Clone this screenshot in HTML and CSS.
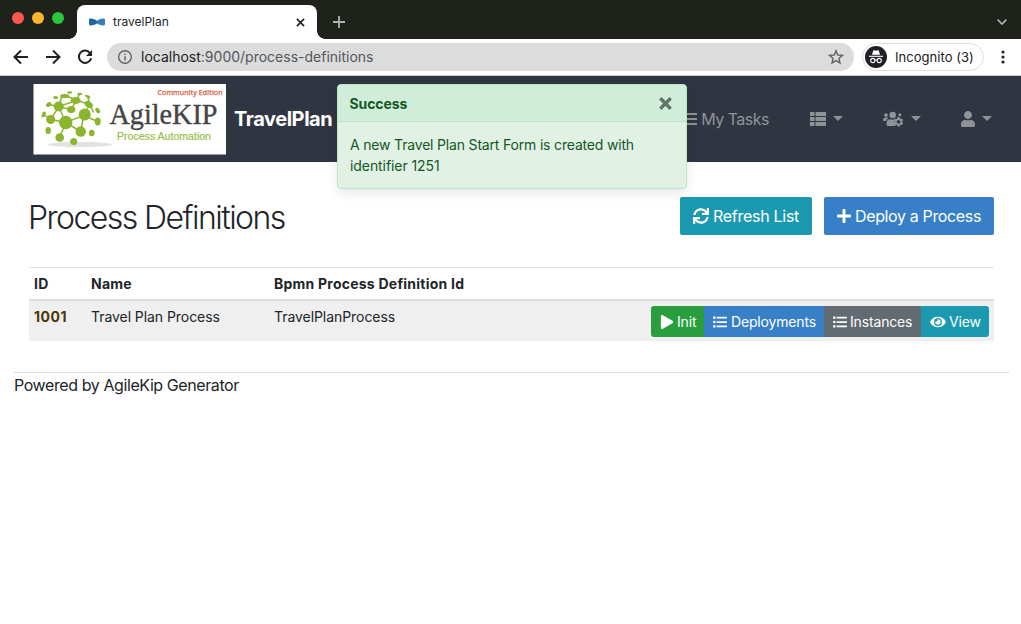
FILE: index.html
```html
<!DOCTYPE html>
<html lang="en">
<head>
<meta charset="utf-8">
<title>travelPlan</title>
<link rel="stylesheet" href="styles.css">
</head>
<body>
<svg class="defs" width="0" height="0">
  <symbol id="list" viewBox="0 0 512 512"><circle cx="48" cy="96" r="48"/><circle cx="48" cy="256" r="48"/><circle cx="48" cy="416" r="48"/><rect x="128" y="64" width="384" height="64" rx="16"/><rect x="128" y="224" width="384" height="64" rx="16"/><rect x="128" y="384" width="384" height="64" rx="16"/></symbol>
</svg>
<header class="browser">
  <div class="tabs">
    <div class="lights"><i class="red"></i><i class="amber"></i><i class="green"></i></div>
    <div class="tab">
      <svg class="favicon" viewBox="0 0 16 8"><path d="M0 1.6Q0 .5 1.4.5 5 .4 8 2.8V5.4Q5 7.3 1.8 7.6 0 7.6 0 6Z" fill="#22669f"/><path d="M16 1.6Q16 .5 14.6.5 11 .4 8 2.8V5.4Q11 7.3 14.2 7.6 16 7.6 16 6Z" fill="#347fbd"/></svg>
      <span class="tab-title">travelPlan</span>
      <svg class="tab-close" viewBox="0 0 10 10"><path d="M1 1l8 8M9 1L1 9"/></svg>
    </div>
    <svg class="new-tab" viewBox="0 0 12 12"><path d="M6 0v12M0 6h12"/></svg>
    <svg class="tab-search" viewBox="0 0 10 6"><path d="M.7.7L5 5 9.300.7"/></svg>
  </div>
  <div class="toolbar">
    <svg class="nav-icon" viewBox="0 0 16 16"><path d="M15 8H2M8 1.500L1.500 8 8 14.500"/></svg>
    <svg class="nav-icon" viewBox="0 0 16 16"><path d="M1 8h13M8 1.500L14.500 8 8 14.500"/></svg>
    <svg class="nav-icon" viewBox="0 0 16 16"><path d="M13.200 4.200A6.200 6.200 0 1 0 14.100 9.200"/><path d="M15 1v6H9z" class="fill"/></svg>
    <div class="address">
      <svg class="info" viewBox="0 0 14 14"><circle cx="7" cy="7" r="6.300"/><path d="M7 6.200v4.200M7 3.500v1.500"/></svg>
      <span class="url"><b>localhost</b>:9000/process-definitions</span>
      <svg class="star" viewBox="0 0 16 16"><path d="M8 1.700l1.800 4.300 4.700.4-3.600 3.100 1.100 4.600L8 11.600l-4 2.500 1.100-4.600L1.500 6.400l4.700-.4z"/></svg>
    </div>
    <div class="incognito">
      <svg viewBox="0 0 22 22"><circle cx="11" cy="11" r="11" fill="#202124"/><path d="M7 8.700l1.300-4.100q.3-.6 1-.4l1.700.5 1.700-.5q.7-.2 1 .4L15 8.700z" fill="#fff"/><path d="M4 10.300h14" stroke="#fff" stroke-width="1.100"/><g fill="none" stroke="#fff" stroke-width="1.100"><circle cx="7.800" cy="14.500" r="2.100"/><circle cx="14.200" cy="14.500" r="2.100"/><path d="M10 14.200q1-.8 2 0"/></g></svg>
      <span>Incognito (3)</span>
    </div>
    <svg class="more" viewBox="0 0 4 14"><circle cx="2" cy="2" r="1.600"/><circle cx="2" cy="7" r="1.600"/><circle cx="2" cy="12" r="1.600"/></svg>
  </div>
</header>

<nav class="navbar">
  <svg class="logo" viewBox="0 0 193 71">
    <rect x=".5" width="192.500" height="70.500" fill="#fff"/>
    <ellipse cx="47" cy="60.500" rx="32" ry="2.600" fill="#e2e2e2"/>
    <g transform="translate(.7 -.5)">
    <g stroke="#8ab52c" stroke-width="1.500" fill="none"><path d="M25 23L43 17 56 21 50 32 32 39 17 36 25 23 37 26 43 17M50 32L64 38M56 21L60 29M32 39L26 54M32 39L47 48 50 32M32 39L25 23M25 23L15 21M43 17L32 12M43 17L46 10M56 21L54 13M17 36L10 31M25 23L28 13"/></g>
    <g fill="#8ab52c"><circle cx="32" cy="39" r="6.700"/><circle cx="25" cy="23" r="5"/><circle cx="51" cy="31" r="6"/><circle cx="47" cy="48" r="5.200"/><circle cx="17" cy="36" r="4.500"/><ellipse cx="37.500" cy="26" rx="4.200" ry="3.500"/><ellipse cx="42" cy="17" rx="5" ry="3.500"/><ellipse cx="55" cy="21" rx="4.500" ry="3" transform="rotate(35 55 21)"/><circle cx="26" cy="54" r="4.300"/><circle cx="40" cy="58" r="3.500"/><ellipse cx="64" cy="38" rx="3" ry="4"/><ellipse cx="58" cy="49.500" rx="2.800" ry="3.300"/><ellipse cx="14.500" cy="47" rx="2.700" ry="3.500"/><ellipse cx="15" cy="21" rx="3" ry="2" transform="rotate(-35 15 21)"/><ellipse cx="10" cy="31" rx="1.800" ry="3" transform="rotate(25 10 31)"/><ellipse cx="31" cy="12.500" rx="4.500" ry="2"/><ellipse cx="46" cy="10.500" rx="2.500" ry="1.300"/><ellipse cx="36" cy="9" rx="2.500" ry="1.200"/><ellipse cx="22" cy="14" rx="2.500" ry="1.500"/><ellipse cx="54" cy="13" rx="3" ry="1.300" transform="rotate(25 54 13)"/><ellipse cx="64" cy="27" rx="2" ry="3" transform="rotate(-35 64 27)"/></g>
    </g>
    <text x="124.500" y="11" textLength="65" class="logo-edition">Community Edition</text>
    <text x="76.500" y="39.500" textLength="108" lengthAdjust="spacingAndGlyphs" class="logo-name">AgileKIP</text>
    <text x="84" y="56" textLength="94" lengthAdjust="spacingAndGlyphs" class="logo-tag">Process Automation</text>
  </svg>
  <span class="brand">TravelPlan</span>
  <div class="menu">
    <span class="tasks"><svg viewBox="0 0 12 14"><path d="M0 2h12M0 7h12M0 12h12"/></svg>My Tasks</span>
    <span class="item entities"><svg width="16" height="14" viewBox="0 0 16 14"><path d="M0 0h4.500v4H0zM5.500 0H16v4H5.500zM0 5h4.500v4H0zM5.500 5H16v4H5.500zM0 10h4.500v4H0zM5.500 10H16v4H5.500z"/></svg><i class="caret"></i></span>
    <span class="item admin"><svg width="20" height="16" viewBox="0 0 640 512"><circle cx="96" cy="130" r="62"/><circle cx="310" cy="125" r="105"/><circle cx="540" cy="120" r="50"/><path d="M0 290q0-80 64-80h64q25 0 42 18-58 32-68 92H20q-20 0-20-30zM110 430q0-165 120-165 75 30 150 0-25 60 0 110l-5 55 35 50H160q-50 0-50-50z"/><path fill-rule="evenodd" d="M462 195h72l8 42 28 16 40-14 36 62-32 28v32l32 28-36 62-40-14-28 16-8 42h-72l-8-42-28-16-40 14-36-62 32-28v-32l-32-28 36-62 40 14 28-16zM498 287a58 58 0 1 0 .1 0z"/></svg><i class="caret"></i></span>
    <span class="item account"><svg width="14" height="16" viewBox="0 0 448 512"><path d="M224 256c70.700 0 128-57.300 128-128S294.700 0 224 0 96 57.300 96 128s57.300 128 128 128zm89.600 32h-16.700c-22.200 10.200-46.900 16-72.900 16s-50.600-5.800-72.900-16h-16.700C60.200 288 0 348.200 0 422.400V464c0 26.500 21.500 48 48 48h352c26.500 0 48-21.500 48-48v-41.600c0-74.200-60.200-134.400-134.400-134.400z"/></svg><i class="caret"></i></span>
  </div>
</nav>

<section class="toast">
  <div class="toast-head"><strong>Success</strong><svg viewBox="0 0 12 12"><path d="M1.200 1.200l9.600 9.600M10.800 1.200l-9.600 9.600"/></svg></div>
  <div class="toast-body"><p class="line-one">A new Travel Plan Start Form is created with</p><p class="line-two">identifier 1251</p></div>
</section>

<main>
  <div class="heading">
    <h1>Process Definitions</h1>
    <button class="btn info-btn refresh"><svg width="16" height="16" viewBox="0 0 512 512"><path d="M440.650 12.570l4 82.770A247.160 247.160 0 0 0 255.830 8C134.730 8 33.910 94.920 12.290 209.820A12 12 0 0 0 24.090 224h49.050a12 12 0 0 0 11.670-9.260 175.910 175.910 0 0 1 317-56.940l-101.460-4.860a12 12 0 0 0-12.570 12v47.410a12 12 0 0 0 12 12H500a12 12 0 0 0 12-12V12a12 12 0 0 0-12-12h-47.370a12 12 0 0 0-11.980 12.570zM255.830 432a175.610 175.610 0 0 1-146-77.800l101.800 4.870a12 12 0 0 0 12.570-12v-47.400a12 12 0 0 0-12-12H12a12 12 0 0 0-12 12V500a12 12 0 0 0 12 12h47.350a12 12 0 0 0 12-12.600l-4.150-82.570A247.170 247.170 0 0 0 255.830 504c121.110 0 221.930-86.920 243.550-201.820a12 12 0 0 0-11.800-14.180h-49.050a12 12 0 0 0-11.670 9.260A175.860 175.860 0 0 1 255.830 432z"/></svg><span>Refresh List</span></button>
    <button class="btn primary deploy"><svg width="14" height="16" viewBox="0 0 448 512"><path d="M416 208H272V64c0-17.670-14.330-32-32-32h-32c-17.670 0-32 14.330-32 32v144H32c-17.670 0-32 14.330-32 32v32c0 17.670 14.330 32 32 32h144v144c0 17.670 14.330 32 32 32h32c17.670 0 32-14.330 32-32V304h144c17.670 0 32-14.330 32-32v-32c0-17.670-14.330-32-32-32z"/></svg><span>Deploy a Process</span></button>
  </div>
  <div class="table">
    <div class="row head"><b class="c-id">ID</b><b class="c-name">Name</b><b class="c-bpmn">Bpmn Process Definition Id</b></div>
    <div class="row data">
      <b class="c-id id-link">1001</b><span class="c-name">Travel Plan Process</span><span class="c-bpmn">TravelPlanProcess</span>
      <div class="group">
        <button class="success g-init"><svg width="14" height="14" viewBox="0 0 448 512"><path d="M424.400 214.700L72.400 6.600C43.800-10.300 0 6.100 0 47.900V464c0 37.500 40.700 60.100 72.400 41.300l352-208c31.400-18.500 31.500-64.100 0-82.600z"/></svg><span>Init</span></button>
        <button class="primary g-deployments"><svg width="14" height="14"><use href="#list"/></svg><span>Deployments</span></button>
        <button class="secondary g-instances"><svg width="14" height="14"><use href="#list"/></svg><span>Instances</span></button>
        <button class="info-btn g-view"><svg width="16" height="14" viewBox="0 0 576 512"><path d="M572.520 241.400C518.290 135.590 410.930 64 288 64S57.680 135.640 3.480 241.410a32.350 32.350 0 0 0 0 29.190C57.710 376.410 165.070 448 288 448s230.320-71.640 284.520-177.410a32.350 32.350 0 0 0 0-29.190zM288 400a144 144 0 1 1 144-144 143.930 143.930 0 0 1-144 144zm0-240a95.310 95.310 0 0 0-25.310 3.790 47.850 47.850 0 0 1-66.900 66.900A95.780 95.780 0 1 0 288 160z"/></svg><span>View</span></button>
      </div>
    </div>
  </div>
</main>
<footer><p>Powered by AgileKip Generator</p></footer>
</body>
</html>
```
FILE: styles.css
```css
* { box-sizing: border-box; }
body { margin: 0; background: #fff; color: #212529; font-family: Inter, "Liberation Sans", sans-serif; font-size: 14px; height: 624px; overflow: hidden; position: relative; }
svg { flex: none; display: block; }
p, h1 { margin: 0; }
span, b, strong, p, h1 { white-space: nowrap; }
button { border: 0; color: #fff; font-family: inherit; padding: 0; display: flex; align-items: center; }
button svg { fill: #fff; }
.defs { position: absolute; }

/* Browser window */
.tabs { height: 39px; background: #1e221b; display: flex; align-items: flex-start; padding-left: 12px; padding-right: 14px; }
.lights { display: flex; gap: 8px; padding-top: 12px; width: 65px; }
.lights i { width: 12px; height: 12px; border-radius: 50%; }
.red { background: #ff5850; }
.amber { background: #fdb52b; }
.green { background: #29c73b; }
.tab { position: relative; width: 240px; height: 34px; margin-top: 5px; background: #fff; border-radius: 8px 8px 0 0; display: flex; align-items: center; padding: 0 12px; }
.tab::before, .tab::after { content: ""; position: absolute; bottom: 0; width: 8px; height: 8px; }
.tab::before { left: -8px; background: radial-gradient(circle at 0 0, transparent 7.500px, #fff 8px); }
.tab::after { right: -8px; background: radial-gradient(circle at 100% 0, transparent 7.500px, #fff 8px); }
.favicon { width: 16px; height: 8px; }
.tab-title { margin-left: 8px; margin-top: -1px; font-size: 12px; flex: 1; }
.tab-close { width: 9px; height: 9px; stroke: #202124; stroke-width: 1.800; }
.new-tab { width: 12px; height: 12px; margin: 16px 0 0 16px; stroke: #b0b2af; stroke-width: 1.800; }
.tab-search { width: 10px; height: 6px; margin: 19px 0 0 auto; fill: none; stroke: #b0b2af; stroke-width: 1.700; }
.toolbar { height: 37px; border-bottom: 1px solid #c9cccb; display: flex; align-items: center; padding: 0 16px 0 13px; }
.nav-icon { width: 16px; height: 16px; margin-right: 16px; fill: none; stroke: #202124; stroke-width: 2; }
.nav-icon .fill { fill: #202124; stroke: none; }
.address { margin-left: -2px; width: 747px; height: 28px; border-radius: 14px; background: #dcdcdc; display: flex; align-items: center; padding: 0 10px 0 11px; }
.info { width: 14px; height: 14px; fill: none; stroke: #5f6368; stroke-width: 1.400; }
.url { margin-left: 9px; margin-top: -1px; font-size: 14px; color: #54575b; flex: 1; }
.url b { color: #202124; font-weight: 400; }
.star { width: 16px; height: 16px; fill: none; stroke: #5f6368; stroke-width: 1.400; }
.incognito { margin-left: 8px; width: 122px; height: 28px; border: 1px solid #dfdfdf; border-radius: 14px; display: flex; align-items: center; padding-left: 2px; font-size: 13px; color: #202124; letter-spacing: .04px; }
.incognito svg { width: 22px; height: 22px; margin-right: 8px; }
.more { width: 4px; height: 14px; margin-left: auto; fill: #202124; }

/* Application bar */
.navbar { height: 86px; background: #303641; display: flex; align-items: center; padding-left: 33px; padding-right: 29px; color: #8f9297; }
.logo { width: 193px; height: 71px; }
.logo-edition { font: 7px "Open Sans", sans-serif; fill: #d8593a; stroke: #d8593a; stroke-width: .25; }
.logo-name { font: 30px "Liberation Serif", serif; fill: #444; stroke: #444; stroke-width: .35; }
.logo-tag { font: 10.500px "Liberation Sans", sans-serif; fill: #93bd3b; stroke: #93bd3b; stroke-width: .15; }
.brand { margin-left: 8px; font-size: 20px; font-weight: 700; color: #fff; letter-spacing: -.45px; }
.menu { margin-left: auto; display: flex; align-items: center; }
.menu svg { fill: currentColor; }
.tasks { display: flex; align-items: center; gap: 4px; font-size: 16px; letter-spacing: -.5px; }
.tasks svg { width: 12px; height: 14px; stroke: currentColor; stroke-width: 2; }
.item { display: flex; align-items: center; gap: 7px; }
.caret { border: 5px solid transparent; border-top-color: currentColor; border-bottom: 0; margin-top: -2px; }
.entities { margin-left: 41px; }
.admin { margin-left: 40px; gap: 8px; }
.account { margin-left: 40px; }

/* Notification */
.toast { position: absolute; z-index: 2; top: 84px; left: 337px; width: 350px; height: 105px; background: #e1f1e4; border: 1px solid #bce4c7; border-radius: 4px; box-shadow: 0 4px 12px rgba(0,0,0,.1); color: #155724; }
.toast-head { height: 37px; background: #d0edd9; border-bottom: 1px solid #bce4c7; border-radius: 3px 3px 0 0; display: flex; align-items: center; justify-content: space-between; padding: 0 14px 0 11.500px; font-size: 14px; letter-spacing: -.1px; }
.toast-head svg { width: 13px; height: 13px; stroke: #647369; stroke-width: 3.100; }
.toast-body { padding: 12px; line-height: 21px; }
.line-one { letter-spacing: -.18px; }
.line-two { letter-spacing: -.08px; }

/* Process list */
main { padding: 35px 27px 0 29px; }
.heading { display: flex; height: 38px; }
h1 { font-size: 32px; font-weight: 300; line-height: 41px; letter-spacing: -1.550px; margin-left: -1px; flex: 1; }
.btn { height: 38px; border-radius: 2px; font-size: 16px; letter-spacing: -.28px; padding-left: 13px; gap: 4px; }
.refresh { width: 132px; }
.deploy { width: 170px; margin-left: 12px; letter-spacing: -.36px; }
.info-btn { background: #1b99b0; }
.primary { background: #377fc7; }
.success { background: #289e3e; }
.secondary { background: #626a72; }
.table { margin-top: 32px; border-top: 1px solid #dee2e6; }
.row { display: flex; padding-left: 5px; }
.head { height: 33px; align-items: center; border-bottom: 2px solid #d8dde1; letter-spacing: .23px; }
.data { height: 40px; background: #efefef; padding-top: 5px; padding-right: 5px; line-height: 21px; letter-spacing: -.06px; }
.c-id { width: 57px; }
.id-link { color: #4a3606; letter-spacing: .5px; }
.c-name { width: 183px; }
.group { display: flex; height: 31px; margin-left: auto; border-radius: 3px; overflow: hidden; }
.group button { font-size: 14px; padding-left: 9px; gap: 4px; letter-spacing: -.16px; }
.group .g-init { width: 53px; padding-left: 9px; gap: 3px; }
.group .g-deployments { width: 120px; }
.group .g-instances { width: 97px; gap: 3px; }
.group .g-view { width: 68px; gap: 3px; }
footer { margin: 31px 12px 0 14px; border-top: 1px solid #dcdddd; font-size: 16px; line-height: 24px; letter-spacing: -.41px; }
```
